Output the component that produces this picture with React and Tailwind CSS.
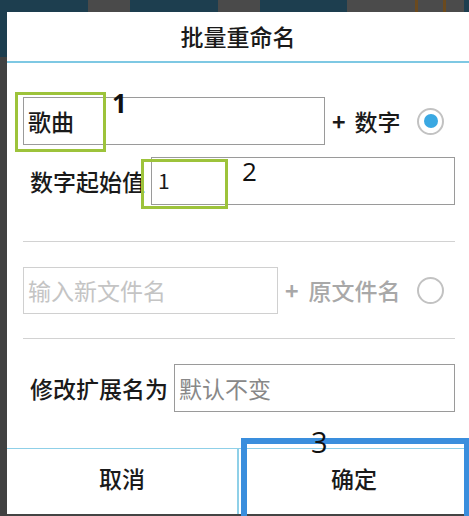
import React from "react";

const cjk = "font-['Noto_Sans_CJK_SC','Noto_Sans',sans-serif]";

function Radio({ checked }) {
  return (
    <div className="w-[27px] h-[27px] rounded-full border-2 border-[#c2c2c2] flex items-center justify-center">
      {checked && <div className="w-[14px] h-[14px] rounded-full bg-[#3aa8e2]" />}
    </div>
  );
}

export default function App() {
  return (
    <div className={`relative w-[469px] h-[516px] bg-[#444444] flex flex-col overflow-hidden ${cjk}`}>
      {/* background strip behind the dialog */}
      <div className="h-[12px] flex shrink-0">
        <div className="w-[88px] bg-[#1d3e4f]" />
        <div className="w-[42px] bg-[#4a4a4a]" />
        <div className="w-[88px] bg-[#1d3e4f]" />
        <div className="w-[42px] bg-[#4a4a4a]" />
        <div className="w-[87px] bg-[#1d3e4f]" />
        <div className="flex-1 bg-[#4b4b4b] flex">
          <div className="ml-[68px] w-[3px] bg-[#6b4a1e]" />
          <div className="ml-[25px] w-[3px] bg-[#6b4a1e]" />
        </div>
        <div className="w-[5px] bg-[#1d3e4f]" />
      </div>

      <div className="flex flex-1">
        <div className="w-[7px] flex flex-col">
          <div className="h-[45px] bg-[#1d3e4f]" />
          <div className="flex-1 bg-[#414141]" />
        </div>

        <div className="flex-1 bg-white flex flex-col mb-[2px] text-[#1a1a1a] text-[23px] font-medium">
          <div className="h-[49px] flex items-center justify-center">批量重命名</div>
          <div className="h-[2px] bg-[#7ec8e3]" />

          <div className="pl-[16px] pr-[14px] flex flex-col">
            <div className="mt-[34px] h-[48px] flex items-center">
              <div className="w-[302px] h-full border border-[#9a9a9a] flex items-center pl-[4px]">歌曲</div>
              <span className="ml-[7px] font-bold">+</span>
              <span className="ml-[9px]">数字</span>
              <div className="ml-auto mr-[11px]">
                <Radio checked />
              </div>
            </div>

            <div className="mt-[12px] h-[48px] flex items-center">
              <span className="ml-[7px]">数字起始值</span>
              <div className="ml-auto w-[304px] h-full border border-[#9a9a9a] flex items-center pl-[6px] text-[21px] font-normal">1</div>
            </div>

            <div className="mt-[36px] h-px bg-[#d2d2d2]" />

            <div className="mt-[25px] h-[47px] flex items-center text-[#a8a8a8]">
              <div className="w-[255px] h-full border border-[#d0d0d0] flex items-center pl-[4px] text-[#c4c4c4] font-normal">输入新文件名</div>
              <span className="ml-[7px] font-bold">+</span>
              <span className="ml-[10px]">原文件名</span>
              <div className="ml-auto mr-[11px]">
                <Radio />
              </div>
            </div>

            <div className="mt-[24px] h-px bg-[#d2d2d2]" />

            <div className="mt-[25px] h-[48px] flex items-center">
              <span className="ml-[7px]">修改扩展名为</span>
              <div className="ml-auto w-[281px] h-full border border-[#9a9a9a] flex items-center pl-[4px] text-[#888] font-normal">默认不变</div>
            </div>
          </div>

          <div className="mt-[36px] h-px bg-[#8fd0e8]" />
          <div className="flex-1 flex">
            <div className="w-[230px] flex items-center justify-center pb-[6px]">取消</div>
            <div className="w-[2px] bg-[#8fd0e8]" />
            <div className="flex-1 flex items-center justify-center pb-[6px]">确定</div>
          </div>
        </div>
      </div>

      {/* annotation overlays */}
      <div className="absolute left-[15px] top-[92px] w-[91px] h-[60px] border-[3px] border-[#9dc33b]" />
      <div className="absolute left-[112px] top-[84px] text-[26px] font-bold text-[#111] font-['Open_Sans',sans-serif]">1</div>
      <div className="absolute left-[141px] top-[159px] w-[87px] h-[50px] border-[3px] border-[#9dc33b]" />
      <div className="absolute left-[242px] top-[152px] text-[26px] text-[#111] font-['Open_Sans',sans-serif]">2</div>
      <div className="absolute left-[241px] top-[438px] w-[228px] h-[84px] border-[5px] border-l-[6px] border-t-[6px] border-[#3a8edd]" />
      <div className="absolute left-[311px] top-[420px] text-[29px] text-[#111] font-['Open_Sans',sans-serif]">3</div>
    </div>
  );
}
